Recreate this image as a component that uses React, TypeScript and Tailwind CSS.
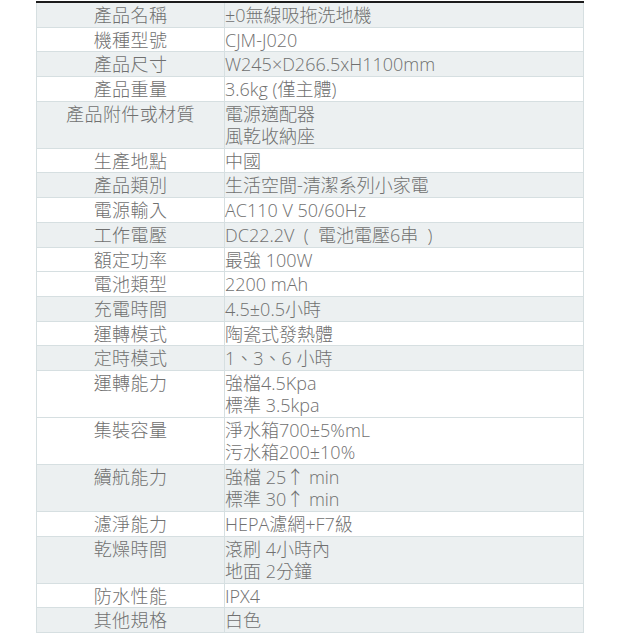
const specs: { label: string; value: string[]; shaded: boolean }[] = [
  { label: '產品名稱', value: ['±0無線吸拖洗地機'], shaded: true },
  { label: '機種型號', value: ['CJM-J020'], shaded: false },
  { label: '產品尺寸', value: ['W245×D266.5xH1100mm'], shaded: true },
  { label: '產品重量', value: ['3.6kg (僅主體)'], shaded: false },
  { label: '產品附件或材質', value: ['電源適配器', '風乾收納座'], shaded: true },
  { label: '生產地點', value: ['中國'], shaded: false },
  { label: '產品類別', value: ['生活空間-清潔系列小家電'], shaded: true },
  { label: '電源輸入', value: ['AC110 V 50/60Hz'], shaded: false },
  { label: '工作電壓', value: ['DC22.2V  (  電池電壓6串  )'], shaded: true },
  { label: '額定功率', value: ['最強 100W'], shaded: false },
  { label: '電池類型', value: ['2200 mAh'], shaded: false },
  { label: '充電時間', value: ['4.5±0.5小時'], shaded: true },
  { label: '運轉模式', value: ['陶瓷式發熱體'], shaded: false },
  { label: '定時模式', value: ['1、3、6 小時'], shaded: true },
  { label: '運轉能力', value: ['強檔4.5Kpa', '標準 3.5kpa'], shaded: false },
  { label: '集裝容量', value: ['淨水箱700±5%mL', '污水箱200±10%'], shaded: false },
  { label: '續航能力', value: ['強檔 25↑ min', '標準 30↑ min'], shaded: true },
  { label: '濾淨能力', value: ['HEPA濾網+F7級'], shaded: false },
  { label: '乾燥時間', value: ['滾刷 4小時內', '地面 2分鐘'], shaded: true },
  { label: '防水性能', value: ['IPX4'], shaded: false },
  { label: '其他規格', value: ['白色'], shaded: true },
]

export default function App() {
  return (
    <div className="w-[638px] h-[638px] bg-white overflow-hidden pt-[1px] pl-[36px]">
      <table
        className="w-[548px] border-collapse border-t-2 border-t-[#1c1c1c] text-[18px] leading-[22.3px] font-light text-[#707070] table-fixed"
        style={{ fontFamily: '"Open Sans", "Noto Sans CJK TC", sans-serif' }}
      >
        <colgroup>
          <col className="w-[188px]" />
          <col />
        </colgroup>
        <tbody>
          {specs.map((row) => {
            const tall = row.value.length > 1
            return (
              <tr key={row.label} className={row.shaded ? 'bg-[#ecf0f1]' : 'bg-white'}>
                <td className="border border-[#d6dfe1] p-0 align-top">
                  <div
                    className={`${tall ? 'h-[46px]' : 'h-[23.7px]'} pt-[1px] text-center tracking-[0.4px]`}
                  >
                    {row.label}
                  </div>
                </td>
                <td className="border border-[#d6dfe1] p-0 align-top whitespace-pre">
                  <div className={`${tall ? 'h-[46px]' : 'h-[23.7px]'} pt-[1px]`}>
                    {row.value.map((line) => (
                      <div key={line}>{line}</div>
                    ))}
                  </div>
                </td>
              </tr>
            )
          })}
        </tbody>
      </table>
    </div>
  )
}
